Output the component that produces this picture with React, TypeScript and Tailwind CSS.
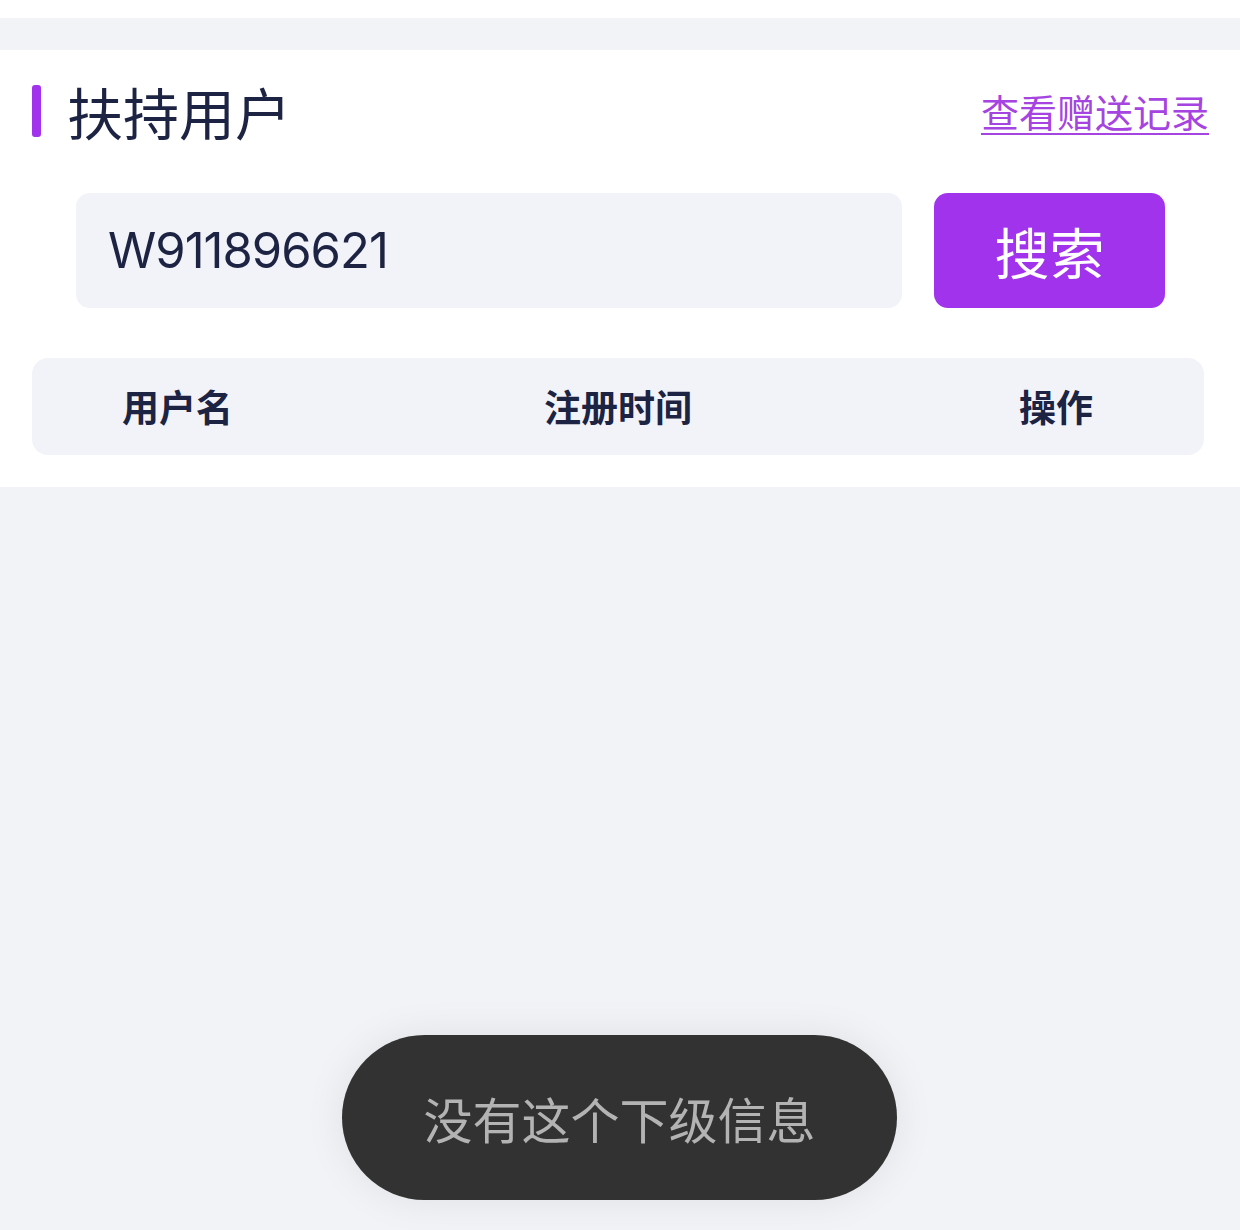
import React from 'react';

const font = { fontFamily: '"Noto Sans CJK SC", Inter, sans-serif' };

export default function App() {
  return (
    <div className="relative min-h-[1230px] flex flex-col bg-[#f2f3f7] font-['Inter','Noto_Sans_CJK_SC',sans-serif]">
      <div className="h-[18px] bg-white" />
      <div className="h-[32px] bg-[#f2f3f7]" />

      {/* 扶持用户 */}
      <section className="bg-white pb-[32px]">
        <div className="h-[122px] flex items-center justify-between pl-[32px] pr-[31px]">
          <div className="flex items-center gap-[26px]">
            <span className="w-[9px] h-[52px] rounded-[3px] bg-[#a133ec]" />
            <h1 className="text-[56px] leading-none text-[#1d2342] font-['Noto_Sans_CJK_SC',sans-serif]">扶持用户</h1>
          </div>
          <a className="text-[38px] leading-none text-[#a544e0] underline underline-offset-[6px] decoration-[2px] font-['Noto_Sans_CJK_SC',sans-serif]">查看赠送记录</a>
        </div>

        <div className="mt-[21px] flex gap-[32px] pl-[76px]">
          <div className="w-[826px] h-[115px] rounded-[14px] bg-[#f2f3f8] flex items-center pl-[32px]">
            <span className="text-[49px] leading-none text-[#1d2342] tracking-[-1px] font-['Inter',sans-serif]">W911896621</span>
          </div>
          <button className="w-[231px] h-[115px] rounded-[14px] bg-[#a133ec] text-white text-[55px] leading-none font-['Noto_Sans_CJK_SC',sans-serif]">搜索</button>
        </div>

        <div className="mt-[50px] ml-[32px] mr-[36px] h-[97px] rounded-[16px] bg-[#f2f3f8] grid grid-cols-3 items-center text-[37px] font-bold text-[#1d2342] leading-none" style={font}>
          <span className="pl-[90px]">用户名</span>
          <span className="text-center">注册时间</span>
          <span className="text-right pr-[111px]">操作</span>
        </div>
      </section>

      <div className="flex-1 bg-[#f2f3f7]" />

      {/* toast */}
      <div className="absolute left-[342px] top-[1035px] w-[555px] h-[165px] rounded-full bg-[#323232] shadow-[0_0_40px_rgba(0,0,0,0.08)] flex items-center justify-center">
        <span className="text-[49px] leading-none text-[#b3b3b3] font-['Noto_Sans_CJK_SC',sans-serif]">没有这个下级信息</span>
      </div>
    </div>
  );
}
